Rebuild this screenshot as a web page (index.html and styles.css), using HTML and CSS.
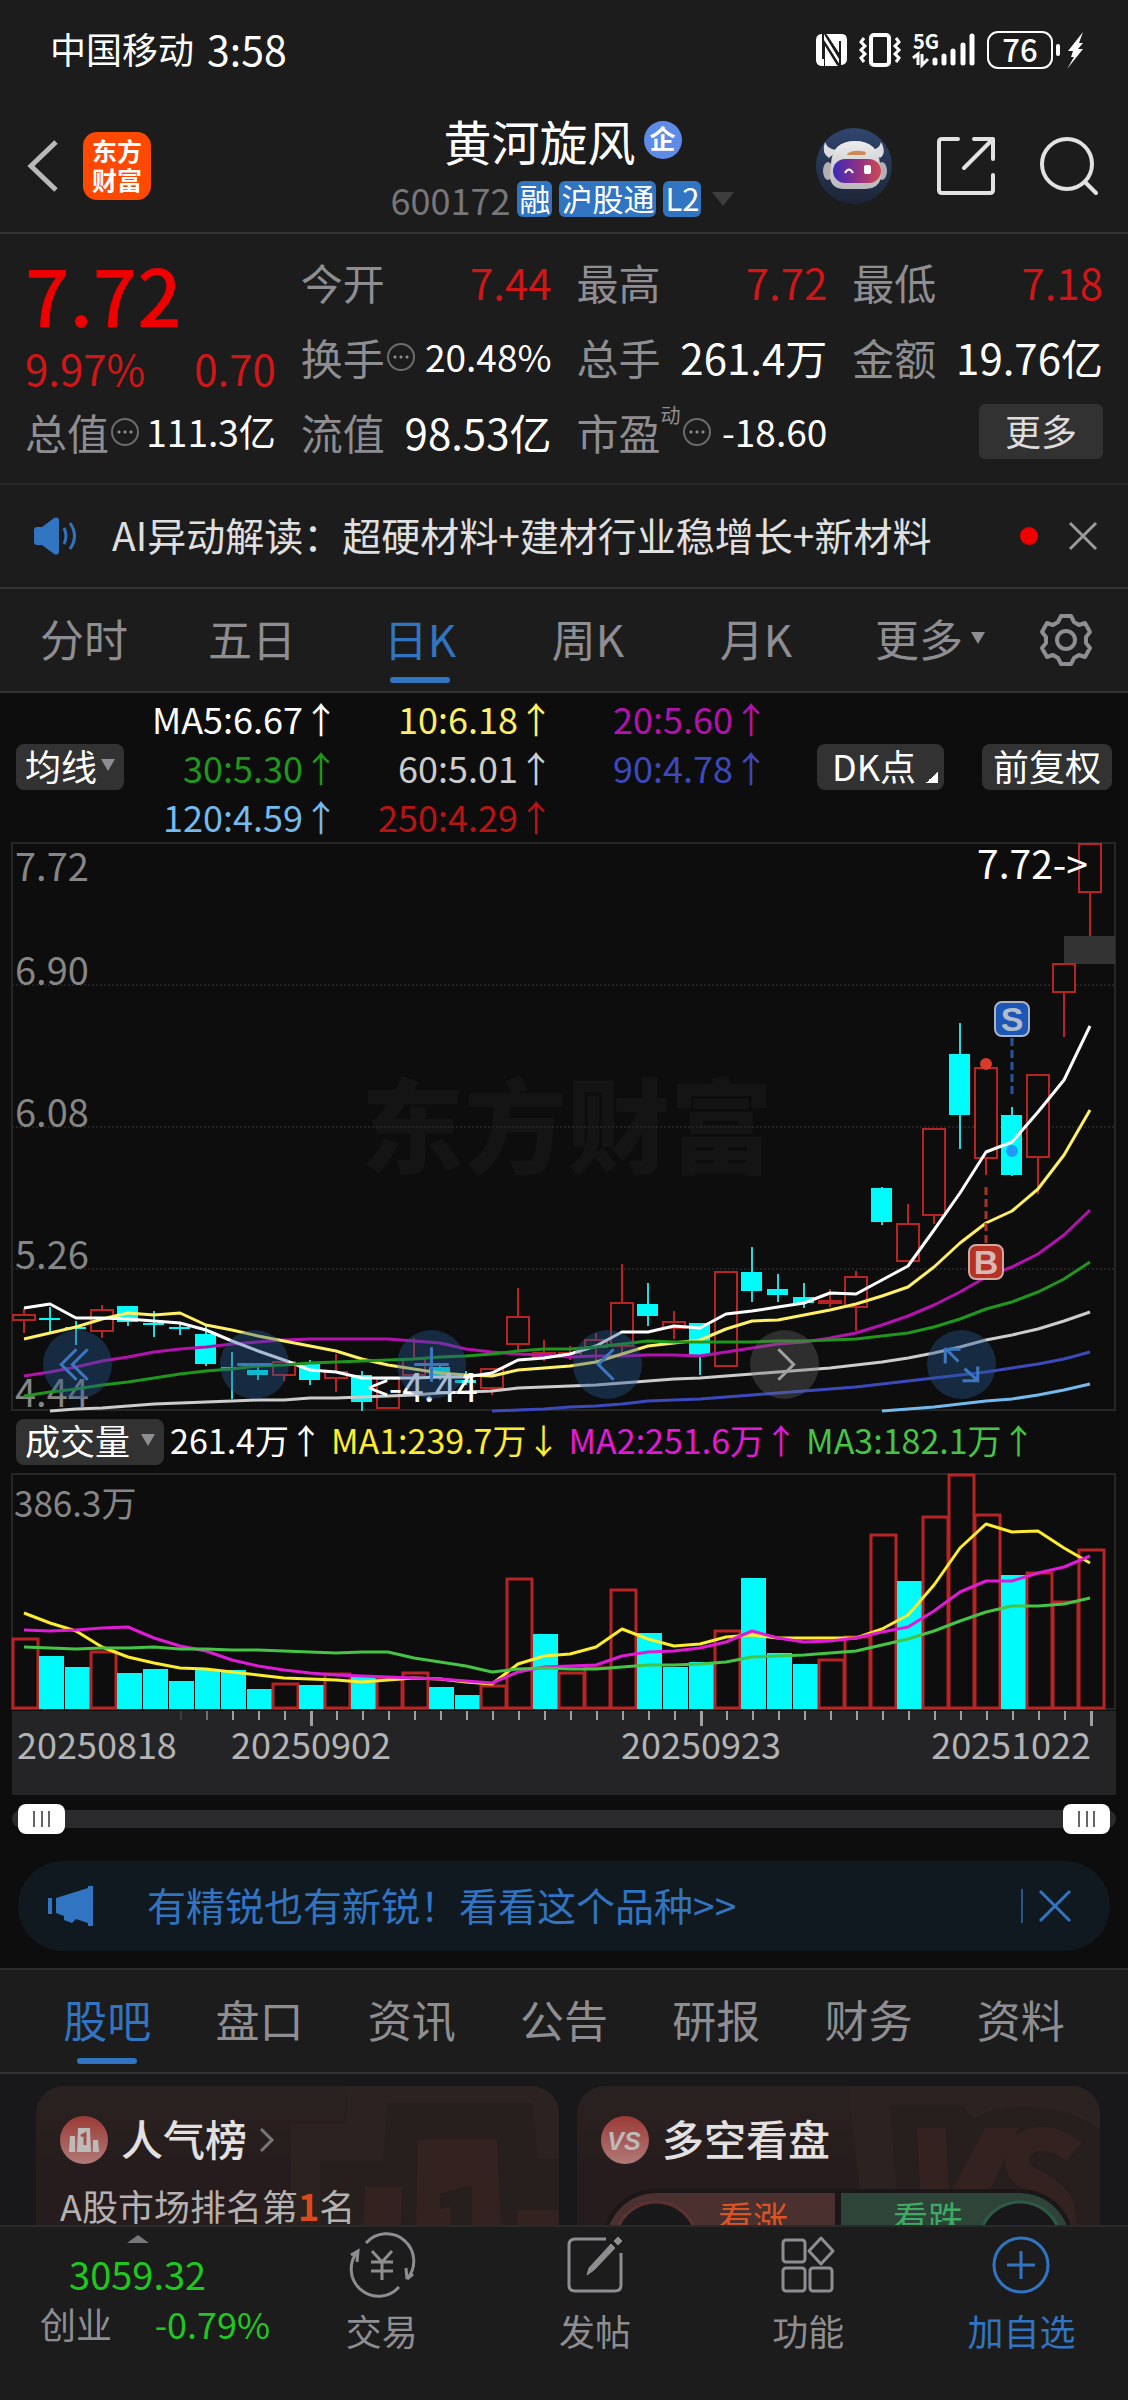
FILE: index.html
```html
<!DOCTYPE html>
<html lang="zh-CN">
<head>
<meta charset="utf-8">
<meta name="viewport" content="width=device-width, initial-scale=1">
<title>黄河旋风 600172</title>
<link rel="stylesheet" href="styles.css">
</head>
<body>
<div class="status">
  <span class="status-carrier">中国移动</span>
  <span class="status-time">3:58</span>
  <div class="status-icons">
    <svg class="nfc" width="31" height="32" viewBox="0 0 31 32" aria-hidden="true"><path d="M7 0H5Q0 1 0 6V26Q0 31 5 32H8V6L24 31H26Q31 30 31 25V6Q31 0 26 0H23V25L8 0Z" fill="#fff"/><path d="M10 0L23 0V19Z" fill="#fff"/><path d="M9 10V32H22Z" fill="#fff"/><path d="M10 1L23 21M9 10L22 31" stroke="#1c1c1c" stroke-width="2"/><path d="M7 0V25M24 7V32" stroke="#1c1c1c" stroke-width="2"/></svg>
    <svg width="42" height="34" viewBox="0 0 42 34" fill="none" stroke="#fff" aria-hidden="true"><rect x="12" y="2" width="18" height="30" rx="3" stroke-width="4"/><path d="M5 5L2 9L6 13L2 17L6 21L2 25L5 29M37 5L40 9L36 13L40 17L36 21L40 25L37 29" stroke-width="3"/></svg>
    <svg width="62" height="36" viewBox="0 0 62 36" aria-hidden="true"><text x="0" y="17" class="net">5G</text><g stroke="#fff" stroke-width="5" stroke-linecap="round"><path d="M22 28V31M31 24V31M40 19V31M50 13V31M59 4V31"/></g><path d="M0 26L5 22V33M9 22V33L15 27" stroke="#fff" stroke-width="3" fill="none"/></svg>
    <span class="battery">76</span><span class="battery-nub"></span>
    <svg width="17" height="37" viewBox="0 0 17 37" aria-hidden="true"><path d="M16 0L1 19H6L4 25H7L0 37L16 17H11L16 11H12Z" fill="#fff"/></svg>
  </div>
</div>

<header class="header">
  <div class="header-left">
    <button class="plain" aria-label="返回"><svg width="32" height="54" viewBox="0 0 32 54"><path d="M29 3L4 27L29 51" fill="none" stroke="#b9b9b9" stroke-width="5"/></svg></button>
    <span class="logo"><span>东方</span><span>财富</span></span>
  </div>
  <div class="title">
    <h1>黄河旋风<span class="corp">企</span></h1>
    <div class="sub"><span class="code">600172</span><span class="tag">融</span><span class="tag">沪股通</span><span class="tag">L2</span><i class="tri tri-dim"></i></div>
  </div>
  <div class="header-right">
    <button class="plain" aria-label="智能助手"><svg width="76" height="76" viewBox="0 0 76 76">
      <defs><linearGradient id="sky" x2="0" y2="1"><stop stop-color="#30456f"/><stop offset="1" stop-color="#1c2436"/></linearGradient><linearGradient id="visor"><stop stop-color="#3a2bb8"/><stop offset=".5" stop-color="#8a3088"/><stop offset="1" stop-color="#d04a52"/></linearGradient><linearGradient id="helmet" x2="0" y2="1"><stop stop-color="#ededed"/><stop offset="1" stop-color="#b9b7bb"/></linearGradient></defs>
      <circle cx="38" cy="38" r="38" fill="url(#sky)"/>
      <path d="M9 14Q5 25 13 30L22 22Q12 22 9 14ZM65 14Q71 25 64 30L54 22Q63 22 65 14Z" fill="#dcdcdf"/>
      <ellipse cx="12" cy="43" rx="5" ry="9" fill="#b5afb4"/><ellipse cx="66" cy="43" rx="5" ry="9" fill="#b5afb4"/>
      <path d="M15 36Q16 13 39 13Q62 13 64 36L65 50Q62 61 50 61H28Q16 61 14 50Z" fill="url(#helmet)"/>
      <path d="M32 25Q39 21 50 24L49 27H31Z" fill="#cf8a55"/>
      <rect x="17" y="31" width="48" height="24" rx="12" fill="url(#visor)"/>
      <path d="M29 45Q33 38 37 45" fill="none" stroke="#fff" stroke-width="2"/><rect x="48" y="37" width="7" height="9" rx="2" fill="#fff"/></svg></button>
    <button class="plain" aria-label="分享"><svg width="58" height="58" viewBox="0 0 58 58" fill="none" stroke="#e2e2e2" stroke-width="4" stroke-linecap="round" stroke-linejoin="round"><path d="M21 2H5Q2 2 2 5V53Q2 56 5 56H53Q56 56 56 53V38M37 2H56V22M56 2L27 31"/></svg></button>
    <button class="plain" aria-label="搜索"><svg width="58" height="58" viewBox="0 0 58 58" fill="none" stroke="#e2e2e2" stroke-width="4" stroke-linecap="round"><circle cx="27" cy="27" r="25"/><path d="M45 45L56 56"/></svg></button>
  </div>
</header>

<section class="quote">
  <div class="quote-main">
    <strong class="price">7.72</strong>
    <div class="pair up"><span>9.97%</span><span>0.70</span></div>
  </div>
  <div class="pair"><span class="label">今开</span><span class="up">7.44</span></div>
  <div class="pair"><span class="label">最高</span><span class="up">7.72</span></div>
  <div class="pair"><span class="label">最低</span><span class="up">7.18</span></div>
  <div class="pair"><span class="label">换手<i class="info"></i></span><span class="small">20.48%</span></div>
  <div class="pair"><span class="label">总手</span><span>261.4万</span></div>
  <div class="pair"><span class="label">金额</span><span>19.76亿</span></div>
  <div class="pair"><span class="label">总值<i class="info"></i></span><span class="small">111.3亿</span></div>
  <div class="pair"><span class="label">流值</span><span>98.53亿</span></div>
  <div class="pair"><span class="label">市盈<sup>动</sup><i class="info"></i></span><span class="small">-18.60</span></div>
  <div class="quote-more"><button class="more-btn">更多</button></div>
</section>

<section class="notice">
  <svg width="44" height="38" viewBox="0 0 44 38" aria-hidden="true"><path d="M0 13Q0 10 3 10H8L20 1Q25 -1 25 4V34Q25 39 20 37L8 28H3Q0 28 0 25Z" fill="#3174c1"/><path d="M30 11Q34 19 30 27M36 6Q45 19 36 32" fill="none" stroke="#3174c1" stroke-width="3"/></svg>
  <p>AI异动解读：超硬材料+建材行业稳增长+新材料</p>
  <i class="dot"></i>
  <button class="plain" aria-label="关闭"><svg width="30" height="30" viewBox="0 0 30 30"><path d="M2 2L28 28M28 2L2 28" stroke="#9a9a9c" stroke-width="3"/></svg></button>
</section>

<nav class="periods">
  <button>分时</button><button>五日</button><button class="on">日K</button><button>周K</button><button>月K</button>
  <button>更多<i class="tri"></i></button>
  <button class="gear" aria-label="设置"><svg width="54" height="54" viewBox="-27 -27 54 54" fill="none" stroke="#8e8e92" stroke-width="4" stroke-linejoin="round"><path d="M-5 -24L5 -24L8 -18L13 -15L19 -17L24 -8L20 -3V3L24 8L19 17L13 15L8 18L5 24H-5L-8 18L-13 15L-19 17L-24 8L-20 3V-3L-24 -8L-19 -17L-13 -15L-8 -18Z"/><circle r="9"/></svg></button>
</nav>

<main class="chart">
  <div class="averages">
    <button class="chip">均线<i class="tri"></i></button>
    <div class="ma-grid">
      <span class="c-white">MA5:6.67↑</span><span class="c-yellow">10:6.18↑</span><span class="c-purple">20:5.60↑</span>
      <span class="c-green">30:5.30↑</span><span class="c-grey">60:5.01↑</span><span class="c-indigo">90:4.78↑</span>
      <span class="c-sky">120:4.59↑</span><span class="c-red">250:4.29↑</span>
    </div>
    <div class="chips"><button class="chip chip-dk">DK点</button><button class="chip chip-adjust">前复权</button></div>
  </div>

  <div class="plot">
    <svg id="price" viewBox="0 842 1128 569" role="img" aria-label="日K线">
      <text x="567" y="1166" class="mark" text-anchor="middle">东方财富</text>
      <g class="frame"><rect x="12" y="843" width="1103" height="567"/><path class="dots" d="M12 985H1115M12 1127H1115M12 1269H1115"/></g>
      <g class="axis"><text x="15" y="881">7.72</text><text x="15" y="985">6.90</text><text x="15" y="1127">6.08</text><text x="15" y="1269">5.26</text><text x="15" y="1407">4.44</text></g>
      <rect x="1064" y="936" width="51" height="28" fill="#333"/>
      <g id="candles"></g><g id="price-lines"></g>
      <g class="signals">
        <path d="M1012 1038V1094" stroke="#2456a0"/><circle cx="1012" cy="1151" r="6" fill="#1f9bff"/>
        <rect x="995" y="1002" width="34" height="34" rx="7" fill="#1c57b5" stroke="#aab4c6"/><text x="1012" y="1031" fill="#b4bccb">S</text>
        <path d="M986 1187V1244" stroke="#a93227"/><circle cx="986" cy="1064" r="6" fill="#d93a2a"/>
        <rect x="969" y="1245" width="34" height="34" rx="7" fill="#b73226" stroke="#cfa7a3"/><text x="986" y="1274" fill="#d8b9b6">B</text>
      </g>
      <g class="extreme"><text x="1088" y="879" text-anchor="end">7.72-&gt;</text><text x="367" y="1402">&lt;-4.44</text></g>
    </svg>
    <div class="tools">
      <button aria-label="最早"><svg viewBox="-34 -34 68 68"><path d="M-1 -15L-16 0L-1 15M10 -15L-5 0L10 15"/></svg></button>
      <button aria-label="缩小"><svg viewBox="-34 -34 68 68"><path d="M-17 0H17"/></svg></button>
      <button aria-label="放大"><svg viewBox="-34 -34 68 68"><path d="M-17 0H17M0 -17V17"/></svg></button>
      <button aria-label="前移"><svg viewBox="-34 -34 68 68"><path d="M6 -15L-9 0L6 15"/></svg></button>
      <button aria-label="后移" class="off"><svg viewBox="-34 -34 68 68"><path d="M-6 -15L9 0L-6 15"/></svg></button>
      <button aria-label="全屏"><svg viewBox="-34 -34 68 68"><path d="M-3 -3L-15 -15M-16 -1V-15H-1M3 4L15 15M1 16H16V2"/></svg></button>
    </div>
  </div>

  <div class="volume-head">
    <button class="chip chip-wide">成交量<i class="tri"></i></button>
    <span class="c-white">261.4万↑</span><span class="c-lemon">MA1:239.7万↓</span><span class="c-magenta">MA2:251.6万↑</span><span class="c-lime">MA3:182.1万↑</span>
  </div>
  <div class="plot">
    <svg id="volume" viewBox="0 1472 1128 323" role="img" aria-label="成交量">
      <g class="frame"><rect x="12" y="1474" width="1103" height="235"/></g>
      <rect x="12" y="1711" width="1104" height="84" fill="#242426"/>
      <g id="bars"></g><g id="volume-lines"></g><g id="ticks"></g>
      <g class="axis"><text x="14" y="1517" class="vol-max">386.3万</text></g>
      <g class="dates"><text x="17" y="1759">20250818</text><text x="311" y="1759" text-anchor="middle">20250902</text><text x="701" y="1759" text-anchor="middle">20250923</text><text x="1091" y="1759" text-anchor="end">20251022</text></g>
    </svg>
  </div>
  <div class="range">
    <input type="range" min="0" max="100" value="0" aria-label="起始日期">
    <input type="range" min="0" max="100" value="100" aria-label="结束日期">
  </div>
  <div class="banner">
    <svg width="45" height="40" viewBox="0 0 45 40" aria-hidden="true"><path d="M0 12H4V28H0ZM8 12L40 2V0H45V40H40V37L28 33L24 37L16 34V30L8 27Z" fill="#3174c1"/></svg>
    <a href="#promo">有精锐也有新锐！看看这个品种&gt;&gt;</a>
    <button class="plain" aria-label="关闭"><svg width="34" height="34" viewBox="0 0 34 34"><path d="M2 2L32 32M32 2L2 32" stroke="#3174c1" stroke-width="3"/></svg></button>
  </div>
</main>

<nav class="sections">
  <button class="on">股吧</button><button>盘口</button><button>资讯</button><button>公告</button><button>研报</button><button>财务</button><button>资料</button>
</nav>

<section class="cards">
  <article class="card">
    <svg class="deco" width="523" height="140" viewBox="0 0 523 140" aria-hidden="true"><path d="M255 140V38H311L312 0H523V140Z" fill="#2c2321"/><path d="M284 140V75H347L351 17H496L502 73H523V140Z" fill="#271e1e"/><path d="M382 53H461L465 140H380ZM329 101H366L365 140H327ZM481 124H523V140H481Z" fill="#332220"/><path d="M404 108L436 99V140H415V120L404 123Z" fill="#271e1e"/></svg>
    <h2><svg width="48" height="48" viewBox="0 0 48 48" aria-hidden="true"><defs><linearGradient id="rose" x2="0" y2="1"><stop stop-color="#9c3a35"/><stop offset="1" stop-color="#b07a78"/></linearGradient></defs><circle cx="24" cy="24" r="24" fill="url(#rose)"/><path d="M10 20H15V36H9ZM18 12H30L31 36H17ZM33 24H38L39 36H33Z" fill="#bdbaba"/><path d="M21 20L25 18V29" fill="none" stroke="#a2504c" stroke-width="3"/></svg><span>人气榜</span><svg width="14" height="24" viewBox="0 0 14 24" aria-hidden="true"><path d="M1 1L12 12L1 23" fill="none" stroke="#777" stroke-width="3"/></svg></h2>
    <p>A股市场排名第<b>1</b>名</p>
  </article>
  <article class="card">
    <svg class="deco" width="523" height="140" viewBox="0 0 523 140" aria-hidden="true"><path d="M271 0H523V140H287Z" fill="#2c2321"/><path d="M313 19H385L396 32Q430 14 480 24Q506 30 523 44V140H322Z" fill="#271e1e"/><path d="M340 42H369L372 110L408 42H442L396 140H345Z" fill="#332220"/><path d="M497 66C478 48 440 46 440 76C440 100 492 94 487 140" fill="none" stroke="#332220" stroke-width="24"/></svg>
    <h2><svg width="48" height="48" viewBox="0 0 48 48" aria-hidden="true"><circle cx="24" cy="24" r="24" fill="url(#rose)"/><text x="23" y="34" text-anchor="middle" class="vs">VS</text></svg><span>多空看盘</span></h2>
    <div class="vote"><button class="bull">看涨</button><button class="bear">看跌</button></div>
  </article>
</section>

<footer class="bottom">
  <a class="index" href="#index"><i class="tri-up"></i><span class="index-value">3059.32</span><span class="index-row"><span class="label">创业</span><span>-0.79%</span></span></a>
  <a href="#trade"><svg width="66" height="58" viewBox="-33 -29 66 58" fill="none" stroke="#8e8e92" stroke-width="3"><path d="M-16 -22A27 27 0 0 1 25 14M25 14L31 9M25 14L24 3M17 22A27 27 0 0 1 -24 -14M-31 -10L-24 -14L-25 -3M-10 -14L0 -3L10 -14M-11 -3H11M-11 6H11M0 -3V15"/></svg>交易</a>
  <a href="#post"><svg width="56" height="58" viewBox="0 0 56 58" fill="none" stroke="#8e8e92" stroke-width="3"><path d="M39 3H8Q2 3 2 9V49Q2 55 8 55H48Q54 55 54 49V17"/><path d="M20 39L22 32L44 8L48 12L27 34ZM47 5L51 1L55 5L51 9Z" fill="#8e8e92" stroke-width="1"/></svg>发帖</a>
  <a href="#functions"><svg width="54" height="58" viewBox="0 0 54 58" fill="none" stroke="#8e8e92" stroke-width="3" stroke-linejoin="round"><rect x="2" y="4" width="22" height="22" rx="3"/><rect x="2" y="32" width="22" height="23" rx="3"/><rect x="29" y="32" width="22" height="23" rx="3"/><path d="M40 2L52 15L40 28L28 15Z"/></svg>功能</a>
  <a href="#watch" class="on"><svg width="58" height="58" viewBox="-29 -29 58 58" fill="none" stroke="#3174c1" stroke-width="3"><circle r="27"/><path d="M-14 0H14M0 -14V14"/></svg>加自选</a>
</footer>
<script src="chart.js"></script>
</body>
</html>
```
FILE: styles.css
```css
* { box-sizing: border-box; }
body {
  margin: 0;
  background: #1c1c1c;
  color: #fff;
  font: 400 36px/1 "Noto Sans CJK SC", "Noto Sans", sans-serif;
}
h1, h2, p { margin: 0; font-weight: 400; }
button { font: inherit; color: inherit; background: none; border: 0; padding: 0; cursor: pointer; }
a { color: inherit; text-decoration: none; }
svg { display: block; flex: none; overflow: visible; }
.plain { display: flex; }
.tri {
  display: inline-block;
  border: solid transparent;
  border-width: 12px 7px 0;
  border-top-color: #8e8e92;
}
.tri-dim { border-width: 14px 11px 0; border-top-color: #3d3d3d; margin-left: 4px; }

/* status bar */
.status { display: flex; align-items: center; height: 100px; padding: 0 44px 0 50px; gap: 13px; }
.status-carrier, .status-time { padding-bottom: 4px; }
.status-time { font-size: 41px; }
.status-icons { display: flex; align-items: center; gap: 12px; margin-left: auto; }
.net { font: 700 20px "Noto Sans CJK SC", sans-serif; fill: #fff; }
.battery {
  display: grid; place-items: center;
  width: 66px; height: 38px; padding-bottom: 3px;
  border: 2px solid #fff; border-radius: 11px;
  font-size: 31px; font-weight: 500;
}
.battery-nub { width: 4px; height: 12px; border-radius: 2px; background: #fff; margin: 0 -5px 0 -9px; }

/* header */
.header {
  display: grid; grid-template-columns: 1fr auto 1fr; align-items: center;
  height: 134px; padding: 0 30px 0 27px;
  border-bottom: 2px solid #333;
}
.header-left { display: flex; align-items: center; gap: 24px; }
.logo {
  display: flex; flex-direction: column; align-items: center; justify-content: center; gap: 4px;
  width: 68px; height: 68px; padding-bottom: 3px; border-radius: 14px;
  background: #ff4800; font-size: 25px; font-weight: 700;
}
.title { display: flex; flex-direction: column; align-items: center; gap: 12px; padding-bottom: 5px; }
.title h1 { display: flex; align-items: center; gap: 8px; font-size: 48px; line-height: 58px; }
.corp {
  display: grid; place-items: center; width: 38px; height: 38px; padding-bottom: 3px; border-radius: 50%;
  background: #5f8be8; font-size: 26px; line-height: 1; font-weight: 700;
}
.sub { display: flex; align-items: center; gap: 7px; }
.code { color: #77777a; }
.tag { background: #3174c1; border-radius: 6px; height: 36px; line-height: 33px; padding: 0 2px; font-size: 31px; }
.header-right { display: flex; align-items: center; justify-content: flex-end; gap: 45px; }

/* quote */
.quote {
  display: grid; grid-template-columns: repeat(4, 1fr); grid-auto-rows: 75px;
  column-gap: 25px; padding: 10px 25px 14px;
  border-bottom: 2px solid #262626; font-size: 42px;
}
.quote-main { grid-row: span 2; display: flex; flex-direction: column; }
.quote-main .pair { height: 52px; }
.price { font-size: 78px; line-height: 98px; font-weight: 500; color: #ee0000; }
.pair { display: flex; align-items: center; justify-content: space-between; white-space: nowrap; }
.up { color: #d01616; }
.label { display: flex; align-items: center; color: #8e8e92; }
.small { font-size: 37px; }
.info {
  display: inline-block; width: 28px; height: 28px; border: 2px solid #6c6c6f; border-radius: 50%; margin-left: 2px;
  background: radial-gradient(circle, #8e8e92 1px, transparent 2px) 9px 9px / 6px 6px no-repeat,
    radial-gradient(circle, #8e8e92 1px, transparent 2px) 3px 9px / 6px 6px no-repeat,
    radial-gradient(circle, #8e8e92 1px, transparent 2px) 15px 9px / 6px 6px no-repeat;
}
sup { font-size: 20px; line-height: 20px; padding-bottom: 34px; }
.quote-more { display: flex; align-items: center; justify-content: flex-end; }
.more-btn { width: 124px; height: 55px; padding-bottom: 4px; border-radius: 6px; background: #323232; color: #ddd; font-size: 36px; }

/* notice */
.notice {
  display: flex; align-items: center; height: 104px; padding: 0 30px 0 34px;
  border-bottom: 2px solid #333; font-size: 39px; color: #e0e0e0;
}
.notice p { flex: 1; margin-left: 34px; padding-bottom: 4px; white-space: nowrap; }
.dot { width: 18px; height: 18px; border-radius: 50%; background: #f00000; margin-right: 30px; }

/* tab rows */
.periods, .sections { display: grid; height: 104px; border-bottom: 2px solid #333; font-size: 44px; color: #8e8e92; }
.periods { grid-template-columns: repeat(5, 168fr) 180fr 108fr; }
.periods button, .sections button { position: relative; display: flex; align-items: center; justify-content: center; gap: 8px; padding-bottom: 4px; }
.periods .gear { padding: 0 16px 0 0; }
.on { color: #3174c1; }
.periods .on::after, .sections .on::after {
  content: ""; position: absolute; left: calc(50% - 30px); bottom: 8px;
  width: 60px; height: 6px; border-radius: 3px; background: #3174c1;
}

/* chart */
.chart { background: #0d0d0d; padding-bottom: 17px; border-bottom: 2px solid #2c2c2c; }
.averages { display: flex; align-items: center; padding: 0 16px 2px; }
.ma-grid {
  display: grid; grid-template-columns: repeat(3, 215px); grid-auto-rows: 49px;
  align-items: center; justify-items: end; width: 645px; margin-right: auto;
}
.chip {
  display: flex; align-items: center; justify-content: center; gap: 4px;
  height: 46px; padding: 0 9px 4px; border-radius: 8px; background: #323232; white-space: nowrap;
}
.chips { display: flex; gap: 38px; }
.chip-adjust { padding: 0 11px 4px; }
.chip-dk { padding: 0 28px 4px 15px; background: linear-gradient(135deg, transparent 50%, #fff 50%) right 6px bottom 7px / 12px 12px no-repeat, #323232; }
.chip-wide { gap: 11px; margin-right: -2px; }
.c-white { color: #fff; }
.c-yellow { color: #fff066; }
.c-purple { color: #b312ad; }
.c-green { color: #1f961c; }
.c-grey { color: #ccc; }
.c-indigo { color: #3c49bd; }
.c-sky { color: #74baee; }
.c-red { color: #b81414; }
.c-lemon { color: #fdec2f; }
.c-magenta { color: #e01bd5; }
.c-lime { color: #45c445; }
.plot { position: relative; }
.plot > svg { width: 100%; height: auto; }
.frame rect { fill: none; stroke: #262626; stroke-width: 2; }
.dots { fill: none; stroke: #222; stroke-width: 2; stroke-dasharray: 2 2; }
.mark { font-size: 103px; font-weight: 900; fill: #141414; }
.axis { font-size: 38px; fill: #868686; }
.vol-max { font-size: 35px; }
.dates { font-size: 36px; fill: #b4b4b4; }
.extreme { font-size: 39px; fill: #fff; }
.signals text { font: 700 34px "Liberation Sans", sans-serif; text-anchor: middle; }
.signals path { stroke-width: 3; stroke-dasharray: 8 4; }
.signals rect { stroke-width: 2; }
.rise { fill: none; stroke: #b82424; stroke-width: 2; }
.rise-box { fill: #0d0d0d; stroke: #b82424; stroke-width: 2; }
#bars .rise-box { stroke-width: 3; }
.fall { fill: none; stroke: #2fd6d6; stroke-width: 2; }
.fall-box { fill: #00fbfb; }
.line { fill: none; stroke-width: 3; stroke-linejoin: round; }
.tools { position: absolute; left: 43px; right: 132px; bottom: 12px; display: flex; justify-content: space-between; }
.tools button { width: 69px; height: 69px; border-radius: 50%; background: rgba(37, 87, 145, .4); }
.tools svg { width: 100%; height: 100%; fill: none; stroke: #3b78c0; stroke-width: 3; }
.tools .off { background: rgba(110, 110, 110, .35); }
.tools .off svg { stroke: #a0a0a2; }
.volume-head { display: flex; align-items: center; gap: 8px; height: 61px; padding: 0 16px; font-size: 34px; white-space: nowrap; }
.volume-head span { padding-bottom: 3px; }
.volume-head .chip { font-size: 35px; }

.range { position: relative; height: 48px; margin: 0 12px; }
.range::before { content: ""; position: absolute; inset: 15px 0; border-radius: 9px; background: #2b2b2d; }
.range input {
  position: absolute; left: 6px; top: 9px; width: calc(100% - 12px); height: 30px; margin: 0;
  appearance: none; background: none; pointer-events: none;
}
.range input::-webkit-slider-thumb {
  appearance: none; pointer-events: auto; width: 47px; height: 30px; border-radius: 8px;
  background: linear-gradient(#666, #666) 15px 7px / 2px 16px no-repeat,
    linear-gradient(#666, #666) 23px 7px / 2px 16px no-repeat,
    linear-gradient(#666, #666) 30px 7px / 2px 16px no-repeat, #fff;
}
.banner {
  display: flex; align-items: center; height: 90px; margin: 18px 18px 0; padding: 0 38px 0 30px;
  border-radius: 45px; background: #101920; color: #3174c1; font-size: 39px;
}
.banner a { flex: 1; margin-left: 54px; padding-bottom: 4px; white-space: nowrap; }
.banner .plain { border-left: 2px solid #28578c; padding-left: 15px; }

.sections { grid-template-columns: repeat(7, 1fr); padding: 0 31px; }

/* cards */
.cards {
  display: grid; grid-template-columns: 1fr 1fr; gap: 18px;
  height: 151px; padding: 12px 28px 0 36px; overflow: hidden; background: #18181a;
}
.card {
  position: relative; height: 220px; padding: 27px 24px; border-radius: 28px; overflow: hidden;
  background: linear-gradient(#2a2220, #261c1d 80px);
}
.deco { position: absolute; right: 0; top: 0; }
.card h2 { position: relative; display: flex; align-items: center; gap: 13px; height: 54px; font-size: 42px; font-weight: 500; color: #e2e0e0; }
.card h2 span { padding-bottom: 5px; }
.card p { position: relative; margin-top: 20px; color: #b4b1b0; }
.card b { color: #dd4a1c; }
.vs { font: italic 700 25px "Liberation Sans", sans-serif; fill: #bdbaba; }
.vote {
  position: relative; display: grid; grid-template-columns: 1fr 1fr; gap: 6px; height: 100px;
  margin: 26px 6px 0 5px; border-radius: 50px; outline: 4px solid #1b1718; overflow: hidden; background: #1b1718;
}
.vote button { display: flex; font-size: 35px; padding-top: 6px; line-height: 36px; }
.vote .bull { justify-content: flex-end; color: #dd5424; padding-right: 47px; background: radial-gradient(circle at 50px 50px, #18181a 39px, #5b3230 40px, #5b3230 42px, transparent 43px), #4a302e; }
.vote .bear { color: #3faa62; padding-left: 52px; background: radial-gradient(circle at calc(100% - 50px) 50px, #18181a 39px, #2f5a45 40px, #2f5a45 42px, transparent 43px), #2e4439; }

/* bottom bar */
.bottom {
  position: relative; display: grid; grid-template-columns: 275fr repeat(4, 213fr);
  min-height: 176px; border-top: 2px solid #2a2a2a; background: #1c1c1c; color: #8e8e92;
}
.bottom a { display: flex; flex-direction: column; align-items: center; gap: 18px; padding-top: 9px; }
.bottom .on { color: #3174c1; }
.bottom .index { gap: 0; color: #1fc81f; padding-top: 8px; }
.tri-up { border: solid transparent; border-width: 0 11px 8px; border-bottom-color: #77777b; }
.index-value { font-size: 38px; line-height: 62px; }
.index-row { display: flex; align-self: stretch; justify-content: space-between; padding: 0 5px 0 40px; }
```
FILE: chart.js
```js
// Each session: [rising, body top, body bottom, high, low], in chart units.
const sessions = [
  [1,1241,1253,1222,1287],[0,1250,1254,1220,1287],[0,1273,1277,1257,1320],[1,1228,1284,1216,1300],
  [0,1217,1260,1217,1270],[0,1262,1266,1230,1298],[0,1273,1278,1265,1294],[0,1290,1369,1270,1375],
  [0,1376,1380,1338,1461],[0,1385,1397,1372,1411],[1,1365,1399,1365,1413],[0,1368,1410,1360,1424],
  [1,1390,1407,1343,1442],[0,1398,1468,1388,1492],[1,1408,1484,1408,1484],[1,1357,1397,1302,1397],
  [0,1377,1402,1370,1410],[0,1410,1418,1388,1424],[1,1383,1431,1383,1450],[1,1247,1318,1171,1332],
  [1,1340,1350,1307,1362],[1,1340,1352,1322,1360],[1,1306,1325,1289,1365],[1,1211,1322,1108,1340],
  [0,1213,1243,1158,1270],[1,1260,1276,1230,1305],[0,1262,1345,1262,1397],[1,1130,1375,1130,1375],
  [0,1130,1179,1063,1206],[0,1172,1188,1134,1206],[0,1193,1211,1158,1224],[1,1205,1209,1172,1220],
  [1,1142,1221,1126,1282],[0,909,998,907,1007],[1,1003,1100,950,1100],[1,754,981,754,1003],
  [0,560,718,479,808],[1,596,832,575,875],[0,719,876,697,878],[1,614,828,614,925],
  [1,324,398,324,515],[1,10,135,10,251]
];
const priceLines = [
  ['#74baee',33,[1492,1487,1481,1475,1467,1460,1450,1438,1422]],
  ['#3c49bd',18,[1491,1489,1486,1482,1478,1473,1467,1464,1460,1455,1449,1444,1439,1434,1429,1422,1414,1405,1397,1390,1380,1370,1357,1339]],
  ['#cccccc',1,[1491,1487,1483,1478,1474,1470,1468,1466,1464,1462,1459,1457,1455,1452,1449,1446,1443,1439,1433,1429,1427,1423,1418,1413,1409,1406,1400,1396,1391,1385,1380,1373,1363,1353,1340,1325,1307,1294,1278,1258,1234]],
  ['#b312ad',0,[1400,1389,1376,1361,1350,1338,1330,1325,1317,1313,1307,1305,1303,1304,1304,1308,1315,1331,1338,1342,1346,1350,1349,1348,1347,1347,1349,1337,1327,1318,1311,1301,1288,1267,1245,1216,1181,1141,1115,1082,1032,967]],
  ['#fff066',0,[1305,1288,1272,1252,1236,1241,1237,1266,1281,1296,1308,1323,1334,1357,1372,1382,1392,1398,1400,1384,1380,1374,1364,1342,1323,1315,1306,1279,1258,1253,1242,1229,1212,1191,1168,1115,1053,1000,970,912,824,705]],
  ['#ffffff',0,[1224,1213,1249,1250,1251,1257,1261,1281,1310,1336,1358,1385,1389,1406,1406,1406,1403,1404,1393,1360,1354,1343,1322,1286,1285,1270,1274,1238,1231,1220,1211,1183,1186,1150,1113,1018,922,815,790,710,627,485]],
  ['#1f961c',0,[1452,1442,1434,1423,1415,1405,1395,1388,1381,1375,1371,1367,1363,1361,1358,1355,1351,1348,1343,1336,1331,1330,1324,1317,1310,1311,1312,1313,1312,1310,1309,1307,1304,1297,1288,1272,1252,1226,1208,1182,1147,1103]]
];
const volumes = [717,767,800,757,818,807,842,808,810,868,852,855,823,830,838,820,862,885,858,537,702,818,805,569,700,802,787,694,535,760,792,781,711,404,543,350,224,345,525,520,606,450];
const sellingVolume = new Set([1,2,4,5,6,7,8,9,11,13,16,17,20,24,25,26,28,29,30,34,38]);
const volumeLines = [
  ['#fdec2f',0,[638,670,692,742,772,789,804,806,815,826,834,838,840,845,840,835,836,847,853,792,768,762,742,686,717,738,732,711,706,714,713,713,714,688,645,555,444,373,396,394,444,488]],
  ['#e01bd5',0,[690,692,691,684,682,714,739,752,779,798,811,820,824,829,832,834,836,843,849,815,800,798,795,769,755,752,745,725,694,715,725,722,714,697,680,633,577,544,542,520,501,469]],
  ['#45c445',0,[740,745,747,743,744,742,748,748,750,750,752,757,758,757,757,774,787,798,815,808,805,808,808,800,794,794,792,785,771,767,764,760,754,734,717,692,662,635,619,618,612,595]]
];

const x = i => 24 + 26 * i;
const priceY = v => Math.round(840 + v / 2.613);
const volumeY = v => Math.round(1400 + v / 3);

function add(parent, tag, attrs) {
  const node = document.createElementNS('http://www.w3.org/2000/svg', tag);
  for (const key in attrs) node.setAttribute(key, attrs[key]);
  document.getElementById(parent).appendChild(node);
}
function drawLines(parent, lines, y) {
  for (const [stroke, start, values] of lines) {
    add(parent, 'polyline', { class: 'line', stroke, points: values.map((v, i) => x(start + i) + ',' + y(v)).join(' ') });
  }
}

sessions.forEach(([rising, top, bottom, high, low], i) => {
  const [t, b, h, l] = [top, bottom, high, low].map(priceY);
  const cx = x(i);
  add('candles', 'path', { class: rising ? 'rise' : 'fall', d: `M${cx} ${h}V${t}M${cx} ${b}V${l}` });
  if (rising) add('candles', 'rect', { class: 'rise-box', x: cx - 11, y: t, width: 22, height: Math.max(b - t, 1) });
  else add('candles', 'rect', { class: 'fall-box', x: cx - 11, y: t, width: 21, height: Math.max(b - t, 2) });

  const v = volumeY(volumes[i]);
  if (sellingVolume.has(i)) add('bars', 'rect', { class: 'fall-box', x: cx - 11, y: v, width: 25, height: 1709 - v });
  else add('bars', 'rect', { class: 'rise-box', x: cx - 11, y: v, width: 25, height: 1708 - v });

  if (i > 5) {
    const long = i % 15 === 11;
    add('ticks', 'rect', { x: cx, y: 1711, width: long ? 3 : 2, height: long ? 15 : 9, fill: '#a0a0a0', opacity: i === 6 ? 0.2 : i === 7 ? 0.6 : 1 });
  }
});
drawLines('price-lines', priceLines, priceY);
drawLines('volume-lines', volumeLines, volumeY);
```
